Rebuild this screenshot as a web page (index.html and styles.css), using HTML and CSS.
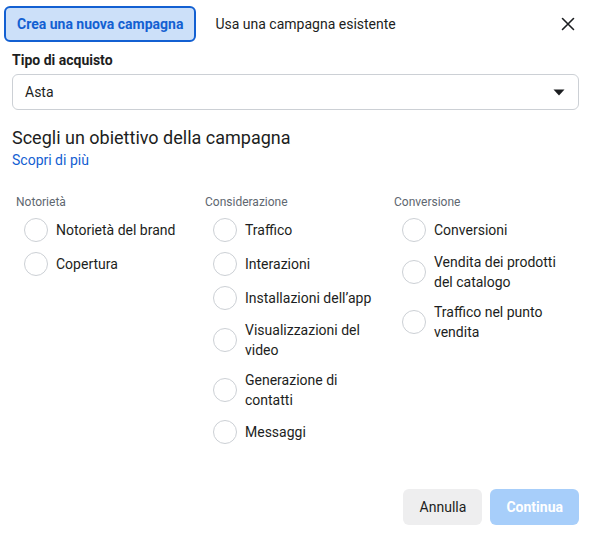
FILE: index.html
```html
<!DOCTYPE html>
<html lang="it">
<head>
<meta charset="utf-8">
<link rel="stylesheet" href="styles.css">
</head>
<body>
<div class="dialog">
  <div class="header">
    <button class="tab tab-active">Crea una nuova campagna</button>
    <button class="tab">Usa una campagna esistente</button>
    <button class="close" aria-label="Chiudi">
      <svg width="14" height="14" viewBox="0 0 14 14"><path d="M1.5 1.5 L12.5 12.5 M12.5 1.5 L1.5 12.5" stroke="#1c1e21" stroke-width="1.6" stroke-linecap="round"/></svg>
    </button>
  </div>
  <div class="body">
    <div class="field-label">Tipo di acquisto</div>
    <div class="select">
      <span>Asta</span>
      <svg width="12" height="7" viewBox="0 0 12 7"><path d="M0.5 0.5 H11.5 L6 6.5 Z" fill="#1c1e21"/></svg>
    </div>
    <h2 class="title">Scegli un obiettivo della campagna</h2>
    <a class="link" href="#">Scopri di più</a>
    <div class="columns">
      <div class="col">
        <div class="col-label">Notorietà</div>
        <label class="opt"><span class="radio"></span><span class="opt-text">Notorietà del brand</span></label>
        <label class="opt"><span class="radio"></span><span class="opt-text">Copertura</span></label>
      </div>
      <div class="col">
        <div class="col-label">Considerazione</div>
        <label class="opt"><span class="radio"></span><span class="opt-text">Traffico</span></label>
        <label class="opt"><span class="radio"></span><span class="opt-text">Interazioni</span></label>
        <label class="opt"><span class="radio"></span><span class="opt-text">Installazioni dell’app</span></label>
        <label class="opt"><span class="radio"></span><span class="opt-text">Visualizzazioni del video</span></label>
        <label class="opt"><span class="radio"></span><span class="opt-text">Generazione di contatti</span></label>
        <label class="opt"><span class="radio"></span><span class="opt-text">Messaggi</span></label>
      </div>
      <div class="col">
        <div class="col-label">Conversione</div>
        <label class="opt"><span class="radio"></span><span class="opt-text">Conversioni</span></label>
        <label class="opt"><span class="radio"></span><span class="opt-text">Vendita dei prodotti del catalogo</span></label>
        <label class="opt"><span class="radio"></span><span class="opt-text">Traffico nel punto vendita</span></label>
      </div>
    </div>
  </div>
  <div class="footer">
    <button class="btn btn-secondary">Annulla</button>
    <button class="btn btn-primary">Continua</button>
  </div>
</div>
</body>
</html>
```

FILE: styles.css
```css
* { box-sizing: border-box; }
html, body { margin: 0; padding: 0; background: #fff; }
body {
  font-family: Roboto, "Liberation Sans", Arial, sans-serif;
  color: #1c1e21;
  font-size: 14px;
  line-height: 20px;
}
.dialog { width: 594px; height: 534px; display: flex; flex-direction: column; }
.header {
  display: flex;
  align-items: center;
  padding: 6px 14px 0 4px;
}
button { font-family: inherit; cursor: pointer; }
.tab {
  height: 36px;
  padding: 0 11px;
  border: 2px solid transparent;
  border-radius: 6px;
  background: transparent;
  font-size: 14px;
  color: #1c1e21;
}
.tab + .tab { margin-left: 6px; }
.tab-active {
  background: #cce0f9;
  border-color: #1360d2;
  color: #1360d2;
  font-weight: 700;
}
.close {
  margin-left: auto;
  width: 24px;
  height: 24px;
  padding: 0;
  border: 0;
  background: transparent;
  display: flex;
  align-items: center;
  justify-content: center;
}
.body { padding: 8px 15px 0 12px; }
.field-label { font-weight: 700; }
.select {
  margin-top: 4px;
  height: 36px;
  border: 1px solid #ccd0d5;
  border-radius: 6px;
  display: flex;
  align-items: center;
  justify-content: space-between;
  padding: 0 13px 0 12px;
}
.title {
  margin: 16px 0 0;
  font-size: 18px;
  line-height: 24px;
  font-weight: 400;
}
.link { display: block; color: #1360d2; text-decoration: none; }
.columns {
  margin-top: 24px;
  display: grid;
  grid-template-columns: repeat(3, 1fr);
}
.col-label {
  padding-left: 4px;
  font-size: 12px;
  line-height: 16px;
  color: #606770;
  margin-bottom: 3px;
}
.opt {
  display: flex;
  align-items: center;
  gap: 8px;
  padding: 5px 0 5px 12px;
  min-height: 34px;
}
.radio {
  flex: none;
  width: 24px;
  height: 24px;
  border-radius: 50%;
  border: 1px solid #ccd0d5;
  background: #fff;
}
.opt-text { max-width: 142px; }
.footer {
  margin-top: auto;
  display: flex;
  justify-content: flex-end;
  gap: 8px;
  padding: 0 15px 9px 0;
}
.btn {
  height: 36px;
  border: 0;
  border-radius: 6px;
  font-size: 14px;
  padding: 0 16px;
}
.btn-secondary { background: #eeeeef; color: #1c1e21; min-width: 79px; }
.btn-primary { background: #a7cefa; color: #fff; font-weight: 700; min-width: 88px; }
```
